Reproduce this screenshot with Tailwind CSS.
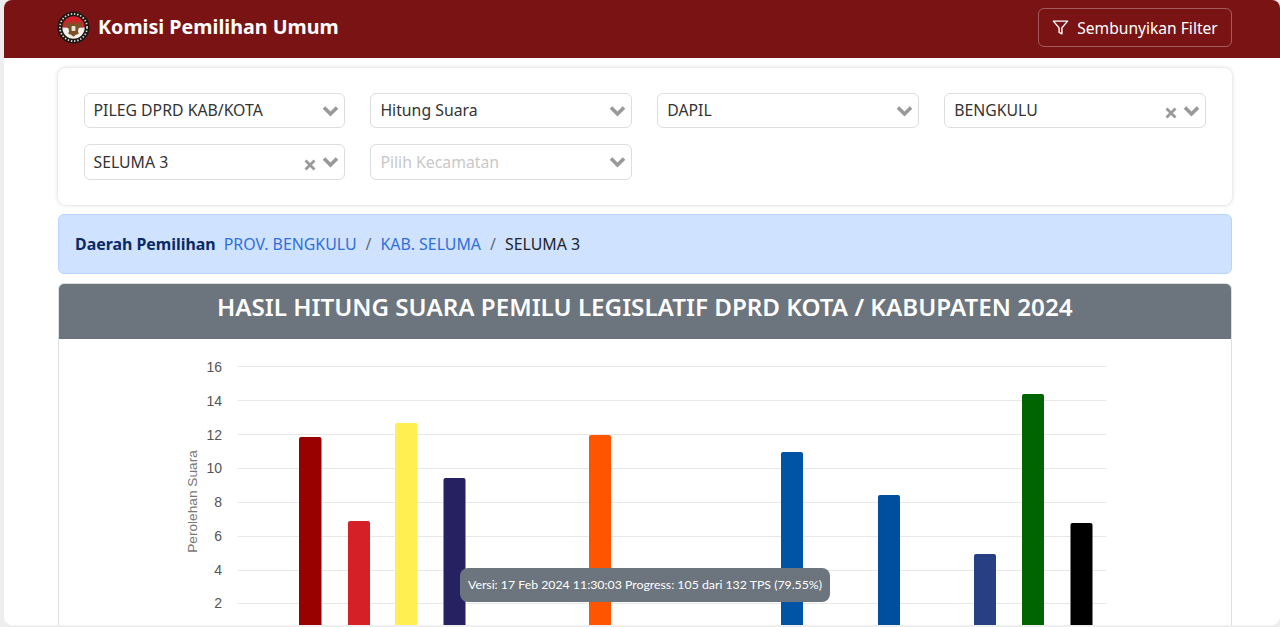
<!DOCTYPE html>
<html>
<head>
<meta charset="utf-8">
<script src="https://cdn.jsdelivr.net/npm/@tailwindcss/browser@4"></script>
</head>
<body class="m-0 h-[627px] overflow-hidden bg-[#eeeeee] font-['Noto_Sans','Open_Sans',sans-serif]">
<div class="relative ml-1 flex h-[625px] flex-col overflow-hidden rounded-lg bg-white">
  <header class="flex h-[58px] shrink-0 items-center justify-between bg-[#7a1414] pb-[4px] pl-[53px] pr-[48px]">
    <div class="flex items-center gap-[8px]">
      <svg width="33" height="33" viewBox="0 0 34 34">
        <circle cx="17" cy="17" r="16.500" fill="#1c1613"/>
        <circle cx="17" cy="17" r="14" fill="none" stroke="#d9d4cc" stroke-width="1.800" stroke-dasharray="1.500 1.800"/>
        <path d="M5.500 17 A11.500 11.500 0 0 1 28.500 17 Z" fill="#d8202a"/>
        <path d="M5.500 17 A11.500 11.500 0 0 0 28.500 17 Z" fill="#f5f0ea"/>
        <path d="M17 9 l1.500 2.500 l-.5 2 l1.500 .5 l2-3 l3.500 1 l.5 4 l-3 1.500 l-1 3 l1 3 l-3 1 l-2.500 2 l-2.500-2 l-3-1 l1-3 l-1-3 l-3-1.500 l.5-4 l3.500-1 l2 3 l1.500-.5 l-.5-2 Z" fill="#7a5428"/>
        <rect x="15" y="15.500" width="4" height="5" rx="1" fill="#e9e2d5"/>
      </svg>
      <span class="text-[19.700px] font-bold text-white">Komisi Pemilihan Umum</span>
    </div>
    <button class="flex h-[39px] w-[194px] items-center justify-center gap-[8px] rounded-md border border-white/30 text-[15.600px] text-white">
      <svg width="17" height="17" viewBox="0 0 24 24" fill="none" stroke="white" stroke-width="2" stroke-linejoin="round" stroke-linecap="round"><polygon points="22 3 2 3 10 12.5 10 19 14 21 14 12.5 22 3"/></svg>
      <span class="mt-[3px]">Sembunyikan Filter</span>
    </button>
  </header>

  <main class="flex flex-col gap-[9px] pl-[54px] pr-[48.500px] pt-[10px]">
    <section class="rounded-lg bg-white px-[25.500px] py-[25px] shadow-[0_0_4px_rgba(0,0,0,0.18)]">
      <div class="grid grid-cols-4 gap-x-[25px] gap-y-[16px] text-[15.800px] text-[#333333]">
        <div class="flex h-[35px] items-center justify-between rounded-md border border-[#dddddd] pl-[9px] pr-[5px]">
          <span>PILEG DPRD KAB/KOTA</span>
          <svg width="17" height="12" viewBox="0 0 17 12" fill="none" stroke="#999999" stroke-width="3.6"><path d="M2 2.5 L8.5 9 L15 2.5"/></svg>
        </div>
        <div class="flex h-[35px] items-center justify-between rounded-md border border-[#dddddd] pl-[9px] pr-[5px]">
          <span>Hitung Suara</span>
          <svg width="17" height="12" viewBox="0 0 17 12" fill="none" stroke="#999999" stroke-width="3.6"><path d="M2 2.5 L8.5 9 L15 2.5"/></svg>
        </div>
        <div class="flex h-[35px] items-center justify-between rounded-md border border-[#dddddd] pl-[9px] pr-[5px]">
          <span>DAPIL</span>
          <svg width="17" height="12" viewBox="0 0 17 12" fill="none" stroke="#999999" stroke-width="3.6"><path d="M2 2.5 L8.5 9 L15 2.5"/></svg>
        </div>
        <div class="flex h-[35px] items-center rounded-md border border-[#dddddd] pl-[9px] pr-[5px]">
          <span class="flex-1">BENGKULU</span>
          <svg class="mr-[6px] mt-[5px]" width="12" height="12" viewBox="0 0 12 12" fill="none" stroke="#999999" stroke-width="2.8"><path d="M1.5 1.5 L10.5 10.5 M10.5 1.5 L1.5 10.5"/></svg>
          <svg width="17" height="12" viewBox="0 0 17 12" fill="none" stroke="#999999" stroke-width="3.6"><path d="M2 2.5 L8.5 9 L15 2.5"/></svg>
        </div>
        <div class="flex h-[36px] items-center rounded-md border border-[#dddddd] pl-[9px] pr-[5px]">
          <span class="mt-[1px] flex-1">SELUMA 3</span>
          <svg class="mr-[6px] mt-[5px]" width="12" height="12" viewBox="0 0 12 12" fill="none" stroke="#999999" stroke-width="2.8"><path d="M1.5 1.5 L10.5 10.5 M10.5 1.5 L1.5 10.5"/></svg>
          <svg width="17" height="12" viewBox="0 0 17 12" fill="none" stroke="#999999" stroke-width="3.6"><path d="M2 2.5 L8.5 9 L15 2.5"/></svg>
        </div>
        <div class="flex h-[36px] items-center justify-between rounded-md border border-[#dddddd] pl-[9px] pr-[5px]">
          <span class="mt-[1px] text-[#c8c8c8]">Pilih Kecamatan</span>
          <svg width="17" height="12" viewBox="0 0 17 12" fill="none" stroke="#999999" stroke-width="3.6"><path d="M2 2.5 L8.5 9 L15 2.5"/></svg>
        </div>
      </div>
    </section>

    <nav class="flex h-[60px] items-center rounded-md border border-[#b6d4fe] bg-[#cfe2ff] pl-[16px] pt-[2px] text-[15.900px]">
      <span class="mr-[8px] font-bold text-[#0a2a66]">Daerah Pemilihan</span>
      <span class="text-[#2f6fdc]">PROV. BENGKULU</span>
      <span class="px-[9px] text-[#5f6b7a]">/</span>
      <span class="text-[#2f6fdc]">KAB. SELUMA</span>
      <span class="px-[9px] text-[#5f6b7a]">/</span>
      <span class="text-[#212529]">SELUMA 3</span>
    </nav>

    <section class="h-[400px] overflow-hidden rounded-md border border-[#dfdfdf]">
      <h1 class="flex h-[55px] items-center justify-center bg-[#6c757d] pb-[8px] text-[24.200px] font-semibold text-white">HASIL HITUNG SUARA PEMILU LEGISLATIF DPRD KOTA / KABUPATEN 2024</h1>
      <svg class="block" width="1172" height="340" viewBox="59 339 1172 340" font-family="'Liberation Sans', sans-serif">
        <g stroke="#e8e8e8" stroke-width="1.2">
          <path d="M238 366.5H1106M238 400.5H1106M238 434.5H1106M238 468.5H1106M238 502.5H1106M238 536.5H1106M238 570.5H1106M238 603.5H1106"/>
        </g>
        <g font-size="14" fill="#555555" text-anchor="end">
          <text x="222" y="372">16</text>
          <text x="222" y="406">14</text>
          <text x="222" y="440">12</text>
          <text x="222" y="473">10</text>
          <text x="222" y="507">8</text>
          <text x="222" y="541">6</text>
          <text x="222" y="575">4</text>
          <text x="222" y="608">2</text>
        </g>
        <text transform="translate(197 501.500) rotate(-90)" font-size="13.700" fill="#777777" text-anchor="middle">Perolehan Suara</text>
        <rect x="299" y="437" width="22.5" height="220" rx="2" fill="#990000"/>
        <rect x="348" y="521" width="22" height="140" rx="2" fill="#d52028"/>
        <rect x="395" y="423" width="22.5" height="240" rx="2" fill="#ffef50"/>
        <rect x="443.500" y="478" width="22" height="200" rx="2" fill="#262262"/>
        <rect x="589" y="435" width="22" height="240" rx="2" fill="#ff5500"/>
        <rect x="781" y="452" width="22" height="220" rx="2" fill="#0054a6"/>
        <rect x="878" y="495" width="22" height="180" rx="2" fill="#004e9e"/>
        <rect x="974" y="554" width="22" height="120" rx="2" fill="#273f83"/>
        <rect x="1022" y="394" width="22" height="280" rx="2" fill="#006400"/>
        <rect x="1070.500" y="523" width="22" height="150" rx="2" fill="#000000"/>
      </svg>
    </section>
  </main>

  <div class="absolute left-[456px] top-[568px] flex h-[34px] w-[370px] items-center justify-center rounded-lg bg-[#6c757d] pt-[1px] font-['Lato',sans-serif] text-[12.300px] text-white">Versi: 17 Feb 2024 11:30:03 Progress: 105 dari 132 TPS (79.55%)</div>
</div>
</body>
</html>
